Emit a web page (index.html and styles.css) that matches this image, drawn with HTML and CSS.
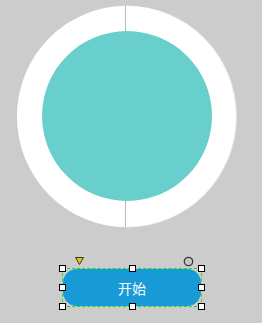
FILE: index.html
```html
<!DOCTYPE html>
<html>
<head>
<meta charset="utf-8">
<link rel="stylesheet" href="styles.css">
</head>
<body>
<div class="canvas">
  <div class="dial">
    <div class="split"></div>
    <div class="core"></div>
  </div>
  <div class="btn-wrap">
    <svg class="anchor-tri" width="9" height="8" viewBox="0 0 9 8"><path d="M0.5 0.5 H8.5 L4.5 7.5 Z" fill="#f2c200" stroke="#333" stroke-width="1"/></svg>
    <svg class="anchor-circle" width="11" height="11" viewBox="0 0 11 11"><circle cx="5.5" cy="5.5" r="4.2" fill="#c4c4c4" stroke="#3a3a3a" stroke-width="1.3"/></svg>
    <div class="btn">开始</div>
    <span class="h h-tl"></span><span class="h h-tc"></span><span class="h h-tr"></span>
    <span class="h h-ml"></span><span class="h h-mr"></span>
    <span class="h h-bl"></span><span class="h h-bc"></span><span class="h h-br"></span>
  </div>
</div>
</body>
</html>
```
FILE: styles.css
```css
html, body {
  margin: 0;
  padding: 0;
  background: #cccccc;
}
.canvas {
  width: 262px;
  height: 323px;
  display: flex;
  flex-direction: column;
  align-items: flex-start;
  font-family: "Noto Sans CJK SC", "Noto Sans", sans-serif;
}
.dial {
  position: relative;
  margin: 6px 0 0 17px;
  width: 219px;
  height: 221px;
  box-sizing: border-box;
  border-radius: 50%;
  background: #ffffff;
  box-shadow: 0.5px 0 0 0.5px #d4f0d0;
  display: flex;
  align-items: center;
  justify-content: center;
}
.split {
  position: absolute;
  left: 108px;
  top: 0;
  bottom: 0;
  width: 1px;
  background: #b9b9b9;
}
.core {
  position: relative;
  width: 170px;
  height: 170px;
  margin-left: 1px;
  margin-top: -2px;
  border-radius: 50%;
  background: #69cfcc;
}
.btn-wrap {
  position: relative;
  margin: 41px 0 0 62px;
  width: 140px;
  height: 39px;
  box-sizing: border-box;
  border: 1px dashed #18e018;
}
.btn {
  width: 100%;
  height: 100%;
  border-radius: 14px;
  background: #179ad5;
  color: #ffffff;
  font-size: 14px;
  display: flex;
  align-items: center;
  justify-content: center;
}
.h {
  position: absolute;
  width: 5px;
  height: 5px;
  background: #fff;
  border: 1px solid #000;
}
.h-tl, .h-tc, .h-tr { top: -4px; }
.h-bl, .h-bc, .h-br { bottom: -4px; }
.h-ml, .h-mr { top: 15px; }
.h-tl, .h-ml, .h-bl { left: -4px; }
.h-tr, .h-mr, .h-br { right: -4px; }
.h-tc, .h-bc { left: 66px; }
.anchor-tri {
  position: absolute;
  left: 12px;
  top: -12px;
}
.anchor-circle {
  position: absolute;
  left: 120px;
  top: -13px;
}
```
